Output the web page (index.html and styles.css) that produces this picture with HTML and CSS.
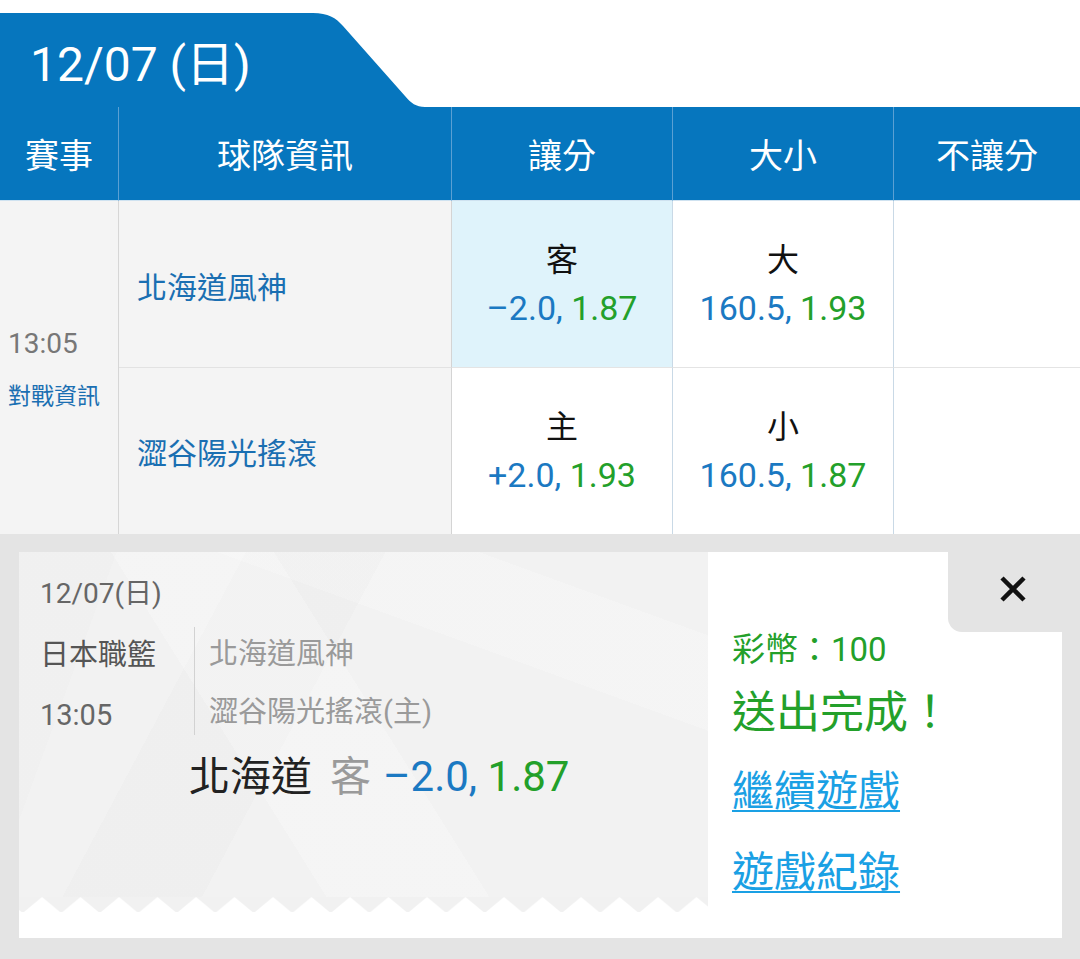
FILE: index.html
```html
<!DOCTYPE html>
<html lang="zh-Hant">
<head>
<meta charset="utf-8">
<title>Bet slip</title>
<link rel="stylesheet" href="styles.css">
</head>
<body>
<div class="page">
  <div class="tab-row">
    <div class="tab">12/07 (日)</div>
    <svg class="tab-ear" width="115" height="94" viewBox="0 0 115 94"><path d="M0 0 H3 C18 0 26 5 33 13 L95 83 C101 90 106 94 115 94 H0 Z" fill="#0676be"/></svg>
  </div>

  <div class="grid">
    <div class="th th-first">賽事</div>
    <div class="th">球隊資訊</div>
    <div class="th">讓分</div>
    <div class="th">大小</div>
    <div class="th th-last">不讓分</div>

    <div class="match">
      <div class="match-time">13:05</div>
      <div class="match-link">對戰資訊</div>
    </div>
    <div class="team team-top">北海道風神</div>
    <div class="odds odds-top odds-active">
      <div class="odds-label">客</div>
      <div class="odds-line"><span class="blue">–2.0,</span> <span class="green">1.87</span></div>
    </div>
    <div class="odds odds-top">
      <div class="odds-label">大</div>
      <div class="odds-line"><span class="blue">160.5,</span> <span class="green">1.93</span></div>
    </div>
    <div class="odds odds-top odds-last"></div>

    <div class="team team-bottom">澀谷陽光搖滾</div>
    <div class="odds">
      <div class="odds-label">主</div>
      <div class="odds-line"><span class="blue">+2.0,</span> <span class="green">1.93</span></div>
    </div>
    <div class="odds">
      <div class="odds-label">小</div>
      <div class="odds-line"><span class="blue">160.5,</span> <span class="green">1.87</span></div>
    </div>
    <div class="odds odds-last"></div>
  </div>

  <div class="result">
    <div class="card">
      <div class="ticket">
        <div class="ticket-body">
          <div class="t-date">12/07(日)</div>
          <div class="t-info">
            <div class="t-left">
              <div class="t-league">日本職籃</div>
              <div class="t-time">13:05</div>
            </div>
            <div class="t-sep"></div>
            <div class="t-right">
              <div class="t-team">北海道風神</div>
              <div class="t-team">澀谷陽光搖滾(主)</div>
            </div>
          </div>
          <div class="t-pick"><span class="t-pick-team">北海道</span><span class="t-pick-side">客</span><span class="t-pick-odds"><span class="blue">–2.0,</span> <span class="green">1.87</span></span></div>
        </div>
        <svg class="zigzag" width="689" height="15" viewBox="0 0 689 15">
          <defs>
            <pattern id="zz" width="38.5" height="15" patternUnits="userSpaceOnUse" x="4">
              <polygon points="1,15 19,0 37,15" fill="#ffffff"/>
            </pattern>
          </defs>
          <rect width="689" height="15" fill="#f1f1f1"/>
          <rect width="689" height="15" fill="url(#zz)"/>
        </svg>
        <div class="ticket-foot"></div>
      </div>
      <div class="panel">
        <div class="panel-top">
          <div class="notch">
            <svg class="close" width="30" height="30" viewBox="0 0 30 30"><path d="M4 4 L26 26 M26 4 L4 26" stroke="#111" stroke-width="4.5" stroke-linecap="butt"/></svg>
          </div>
        </div>
        <div class="panel-body">
          <div class="coins">彩幣：100</div>
          <div class="done">送出完成！</div>
          <a class="link link-first" href="#">繼續遊戲</a>
          <a class="link" href="#">遊戲紀錄</a>
        </div>
      </div>
    </div>
  </div>
</div>
</body>
</html>
```
FILE: styles.css
```css
* { box-sizing: border-box; }
html, body { margin: 0; padding: 0; background: #ffffff; }
body {
  font-family: Roboto, "Noto Sans CJK TC", sans-serif;
  width: 1080px;
  height: 959px;
  overflow: hidden;
}
.page { width: 1080px; }

.blue { color: #1b79c2; }
.green { color: #23a02a; }

/* tab */
.tab-row {
  display: flex;
  margin-top: 13px;
  height: 94px;
}
.tab {
  width: 310px;
  height: 94px;
  background: #0676be;
  color: #ffffff;
  font-size: 48px;
  font-weight: 400;
  padding-left: 30px;
  display: flex;
  align-items: center;
  white-space: nowrap;
}
.tab-ear { display: block; }

/* table */
.grid {
  display: grid;
  grid-template-columns: 119px 333px 221px 221px 186px;
  grid-template-rows: 94px 167px 166px;
}
.th {
  background: #0676be;
  color: #ffffff;
  font-size: 34px;
  display: flex;
  align-items: center;
  justify-content: center;
  border-right: 1px solid #5aa0d3;
  border-bottom: 1px solid #cfe2f0;
}
.th-last { border-right: none; }

.match {
  grid-row: 2 / span 2;
  background: #f4f4f4;
  border-right: 1px solid #d6d6d6;
  display: flex;
  flex-direction: column;
  justify-content: center;
  padding-left: 8px;
  padding-top: 2px;
}
.match-time {
  font-size: 28px;
  color: #777777;
  line-height: 36px;
}
.match-link {
  font-size: 23px;
  color: #1a6fb2;
  line-height: 30px;
  margin-top: 20px;
}

.team {
  background: #f4f4f4;
  border-right: 1px solid #d4d4d4;
  color: #1a6fb2;
  font-size: 30px;
  display: flex;
  align-items: center;
  padding-left: 18px;
}
.team-top { border-bottom: 1px solid #e2e2e2; padding-top: 2px; }
.team-bottom { padding-top: 0; }

.odds {
  background: #ffffff;
  border-right: 1px solid #c9d9e6;
  display: flex;
  flex-direction: column;
  align-items: center;
  justify-content: center;
}
.odds-top { border-bottom: 1px solid #e4e4e4; }
.odds-active { background: #dff3fb; }
.odds-last { border-right: none; }
.odds-label {
  font-size: 32px;
  color: #111111;
  line-height: 40px;
  margin-top: 2px;
}
.odds-line {
  font-size: 34px;
  line-height: 44px;
  margin-top: 6px;
  white-space: nowrap;
}

/* result */
.result {
  background: #e4e4e4;
  padding: 18px 18px 21px 19px;
}
.card {
  display: flex;
  height: 386px;
  background: #ffffff;
}
.ticket {
  width: 689px;
  display: flex;
  flex-direction: column;
}
.ticket-body {
  flex: 1;
  padding: 22px 0 0 21px;
  background:
    linear-gradient(58deg, transparent 0 34%, rgba(255,255,255,0.22) 34% 52%, transparent 52%),
    linear-gradient(-62deg, transparent 0 58%, rgba(0,0,0,0.01) 58% 74%, transparent 74%),
    linear-gradient(20deg, transparent 0 70%, rgba(255,255,255,0.2) 70% 86%, transparent 86%),
    linear-gradient(110deg, rgba(0,0,0,0.008) 0 12%, transparent 12%),
    #f2f2f2;
}
.zigzag { display: block; }
.ticket-foot { height: 26px; background: #ffffff; }

.t-date {
  font-size: 28px;
  color: #666666;
  line-height: 40px;
}
.t-info {
  display: flex;
  margin-top: 11px;
}
.t-left {
  width: 154px;
  color: #555555;
}
.t-league { font-size: 29px; line-height: 60px; }
.t-time { font-size: 29px; line-height: 60px; color: #666666; }
.t-sep {
  width: 1px;
  height: 108px;
  margin-top: 2px;
  background: #d2d2d2;
}
.t-right {
  padding-left: 14px;
  color: #9a9a9a;
}
.t-team { font-size: 29px; line-height: 58px; }
.t-pick {
  font-size: 41px;
  line-height: 56px;
  margin-top: 4px;
  padding-left: 149px;
  white-space: nowrap;
}
.t-pick-team { color: #222222; }
.t-pick-side { color: #9a9a9a; margin-left: 18px; }
.t-pick-odds { font-size: 42px; margin-left: 12px; }

.panel {
  flex: 1;
  display: flex;
  flex-direction: column;
}
.panel-top {
  display: flex;
  justify-content: flex-end;
  height: 80px;
}
.notch {
  width: 114px;
  height: 80px;
  background: #e4e4e4;
  border-bottom-left-radius: 14px;
  display: flex;
  justify-content: flex-end;
  padding: 22px 34px 0 0;
}
.close { display: block; }
.panel-body {
  padding-left: 24px;
  display: flex;
  flex-direction: column;
  align-items: flex-start;
}
.coins {
  font-size: 33px;
  line-height: 36px;
  color: #23a02a;
}
.done {
  font-size: 44px;
  line-height: 56px;
  color: #23a02a;
  margin-top: 17px;
}
.link {
  font-size: 42px;
  line-height: 50px;
  color: #1aa0e4;
  text-decoration: underline;
  text-decoration-thickness: 2px;
  text-underline-offset: 4px;
}
.link-first { margin-top: 26px; }
.link + .link { margin-top: 31px; }
```
